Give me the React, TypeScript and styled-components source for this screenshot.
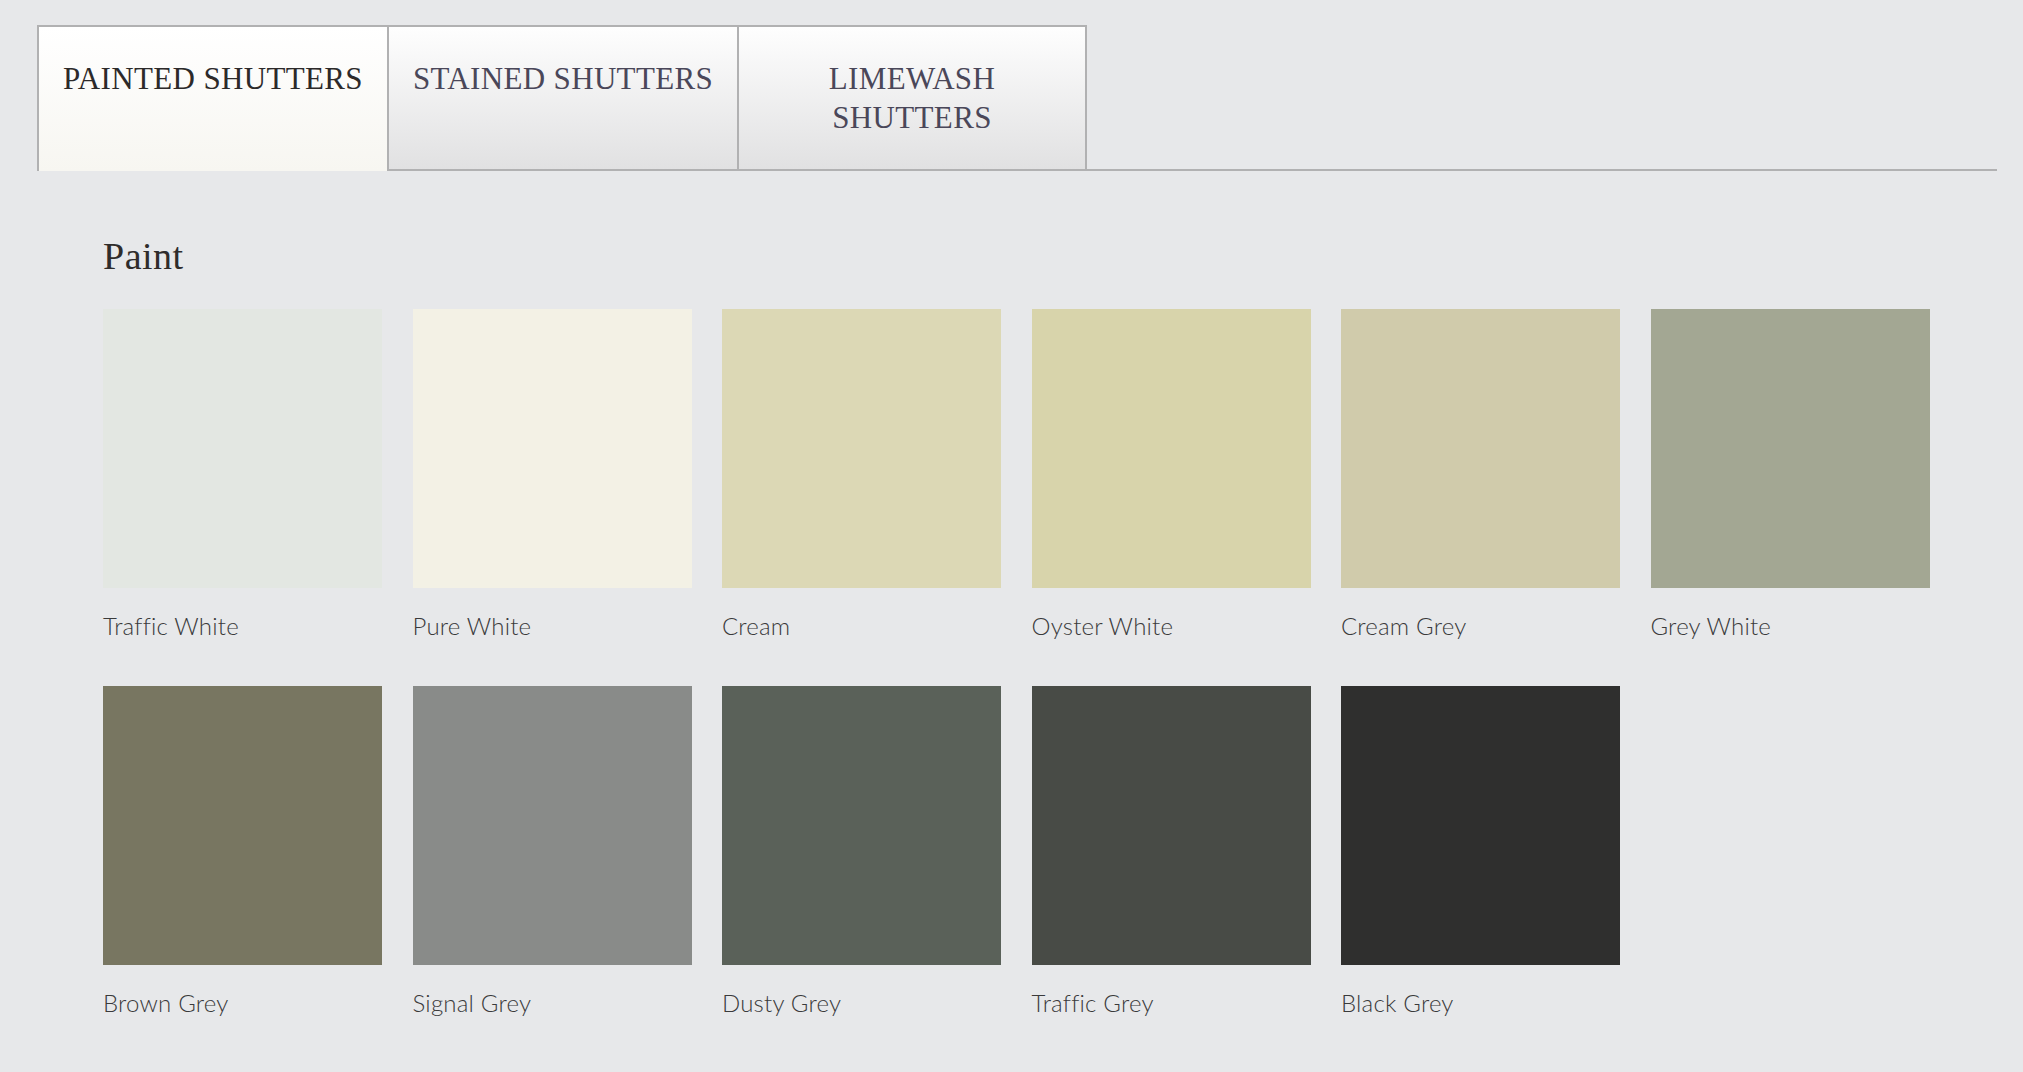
import React, { useState } from "react";
import styled, { createGlobalStyle } from "styled-components";

const GlobalStyle = createGlobalStyle`
  html, body {
    margin: 0;
    padding: 0;
    background: #e7e8ea;
  }
  body {
    min-height: 100vh;
  }
`;

const Page = styled.div`
  padding: 25px 26px 40px 37px;
  box-sizing: border-box;
`;

const TabBar = styled.div`
  display: flex;
  align-items: flex-end;
  border-bottom: 2px solid #b1b1b2;
`;

const Tab = styled.button<{ $active: boolean }>`
  box-sizing: border-box;
  width: 350px;
  height: ${(p) => (p.$active ? "146px" : "144px")};
  margin: 0 0 ${(p) => (p.$active ? "-2px" : "0")};
  padding: 32px 18px 0;
  display: flex;
  align-items: flex-start;
  justify-content: center;
  text-align: center;
  border: 0;
  border-top: 2px solid #b1b1b2;
  border-left: 2px solid #b1b1b2;
  background: ${(p) =>
    p.$active
      ? "linear-gradient(to bottom, #ffffff 0%, #f7f6f1 100%)"
      : "linear-gradient(to bottom, #fefefe 0%, #e1e1e2 100%)"};
  color: ${(p) => (p.$active ? "#2c2a2a" : "#4a4759")};
  font-family: "Liberation Serif", "Times New Roman", serif;
  font-size: 31px;
  line-height: 39px;
  letter-spacing: 0.35px;
  text-transform: uppercase;
  cursor: pointer;

  &:last-child {
    border-right: 2px solid #b1b1b2;
  }
`;

const Panel = styled.section`
  padding: 63px 0 0 66px;
`;

const Heading = styled.h2`
  margin: 0 0 31px;
  font-family: "Liberation Serif", "Times New Roman", serif;
  font-weight: 400;
  font-size: 38px;
  line-height: 44px;
  letter-spacing: 0.5px;
  color: #2f2c2b;
`;

const SwatchGrid = styled.div`
  display: grid;
  grid-template-columns: repeat(6, 279px);
  column-gap: 30.5px;
  row-gap: 46px;
`;

const SwatchItem = styled.div`
  display: flex;
  flex-direction: column;
`;

const Chip = styled.div<{ $color: string }>`
  width: 279px;
  height: 279px;
  background: ${(p) => p.$color};
`;

const Label = styled.span`
  margin-top: 24px;
  font-family: Lato, "Open Sans", sans-serif;
  font-weight: 300;
  font-size: 24px;
  line-height: 28px;
  letter-spacing: 0.2px;
  color: #3a3a3b;
`;

const tabs = ["Painted Shutters", "Stained Shutters", "Limewash Shutters"];

const paints = [
  { name: "Traffic White", color: "#e3e7e2" },
  { name: "Pure White", color: "#f3f1e5" },
  { name: "Cream", color: "#dcd8b5" },
  { name: "Oyster White", color: "#d8d4ab" },
  { name: "Cream Grey", color: "#d0cbab" },
  { name: "Grey White", color: "#a3a793" },
  { name: "Brown Grey", color: "#787661" },
  { name: "Signal Grey", color: "#898b89" },
  { name: "Dusty Grey", color: "#5a6159" },
  { name: "Traffic Grey", color: "#484b46" },
  { name: "Black Grey", color: "#2f2f2e" },
];

export default function App() {
  const [active, setActive] = useState(0);

  return (
    <Page>
      <GlobalStyle />
      <TabBar>
        {tabs.map((t, i) => (
          <Tab key={t} $active={i === active} onClick={() => setActive(i)}>
            {t}
          </Tab>
        ))}
      </TabBar>
      <Panel>
        <Heading>Paint</Heading>
        <SwatchGrid>
          {paints.map((p) => (
            <SwatchItem key={p.name}>
              <Chip $color={p.color} />
              <Label>{p.name}</Label>
            </SwatchItem>
          ))}
        </SwatchGrid>
      </Panel>
    </Page>
  );
}
